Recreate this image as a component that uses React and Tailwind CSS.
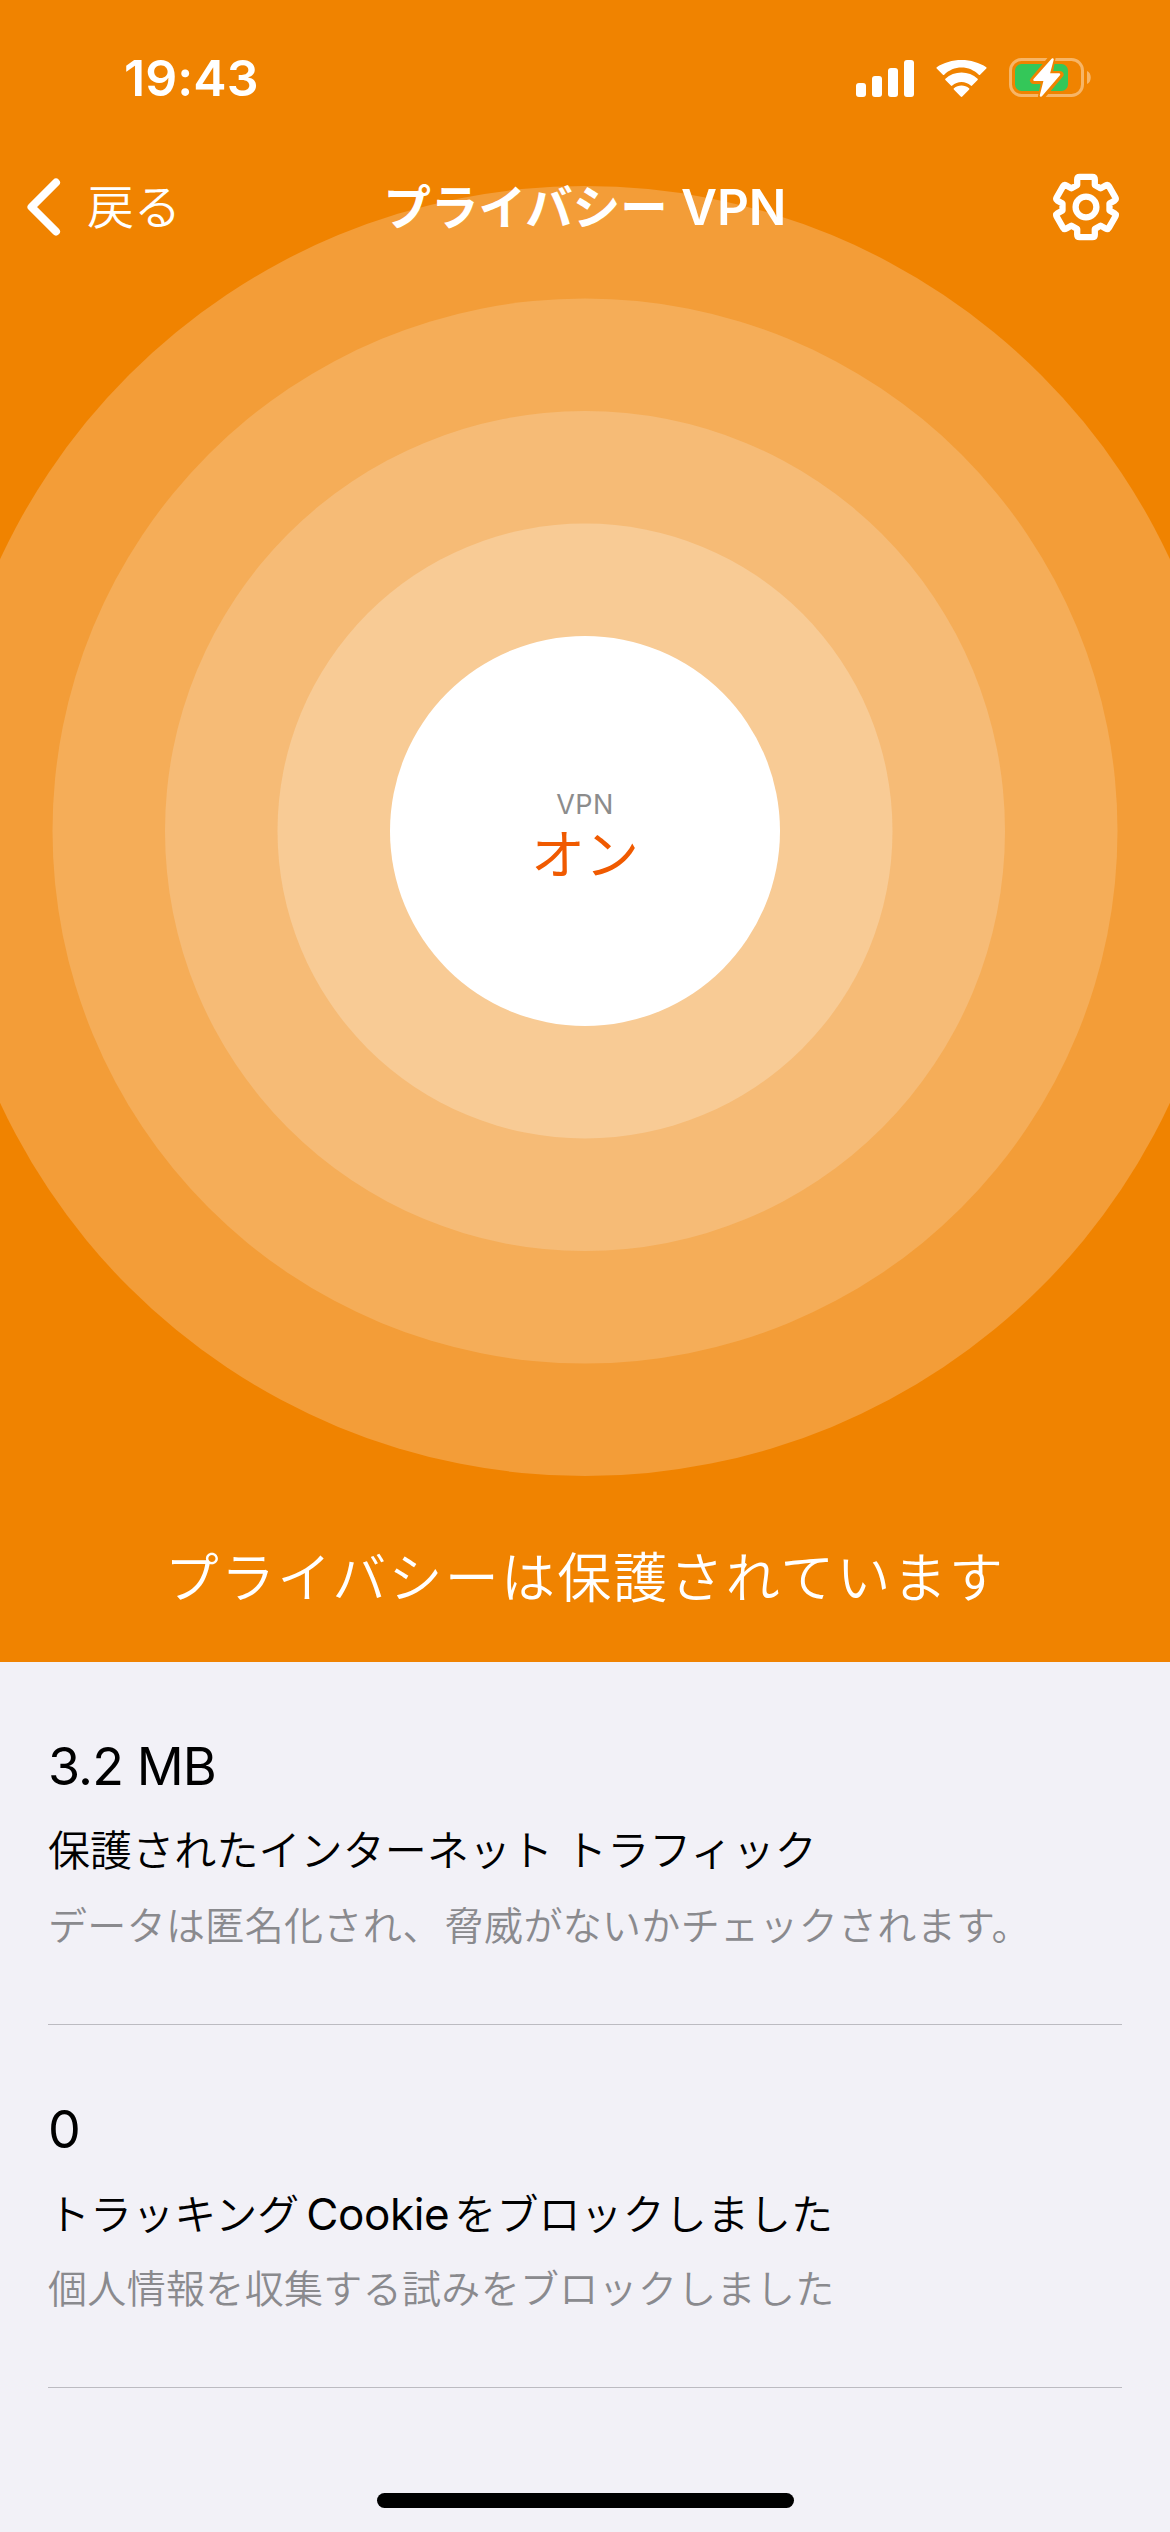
import React from 'react';

const rings = [
  'h-[1290px] w-[1290px] bg-[#f39d38]',
  'h-[1065px] w-[1065px] bg-[#f5ad58]',
  'h-[840px] w-[840px] bg-[#f6bb76]',
  'h-[615px] w-[615px] bg-[#f8cb95]',
];

const stats = [
  {
    value: '3.2 MB',
    title: '保護されたインターネット トラフィック',
    detail: (
      <>
        データは匿名化され<span className="mr-[3px]">、</span>脅威がないかチェックされます。
      </>
    ),
  },
  {
    value: '0',
    title: (
      <>
        トラッキング
        <span className="mr-[5px] ml-[7px] text-[44px] font-normal tracking-[-0.4px]">Cookie</span>
        をブロックしました
      </>
    ),
    detail: '個人情報を収集する試みをブロックしました',
  },
];

const SignalIcon = () => (
  <svg className="h-[37px] w-[58px]" viewBox="0 0 58 37" fill="#fff">
    <rect x="0" y="23" width="10" height="14" rx="3" />
    <rect x="16" y="16" width="10" height="21" rx="3" />
    <rect x="32" y="8" width="10" height="29" rx="3" />
    <rect x="48" y="0" width="10" height="37" rx="3" />
  </svg>
);

const WifiIcon = () => (
  <svg className="ml-[22px] h-[37px] w-[51px]" viewBox="0 0 51 37" fill="#fff">
    <path d="M25.5 7.6c6.5 0 12.6 2.6 17.3 7.1.4.4.9.4 1.3 0l6.2-6.2c.4-.4.4-.9 0-1.3C43.5 2.7 34.5 0 25.5 0S7.5 2.7.7 7.2c-.4.4-.4.9 0 1.3l6.2 6.2c.4.4.9.4 1.3 0 4.7-4.5 10.8-7.1 17.3-7.1z" />
    <path d="M25.5 22c3.4 0 6.7 1.3 9.2 3.6.4.4 1 .4 1.4 0l5.5-5.5c.4-.4.4-1 0-1.3-4.4-4.1-10.1-6.3-16.1-6.3s-11.7 2.2-16.1 6.3c-.4.3-.4.9 0 1.3l5.5 5.5c.4.4 1 .4 1.4 0 2.5-2.3 5.8-3.6 9.2-3.6z" />
    <path d="M33.2 29.4c.3-.4.3-.9-.1-1.2-2.2-1.7-4.8-2.7-7.6-2.7s-5.4 1-7.6 2.7c-.4.3-.4.8-.1 1.2l6.9 7.1c.4.5 1.2.5 1.6 0z" />
  </svg>
);

const BatteryIcon = () => (
  <svg className="mb-[2px] ml-[21px] h-[43px] w-[84px]" viewBox="0 0 84 43" fill="none">
    <rect x="2.5" y="3.5" width="72" height="36" rx="11" stroke="#f7b566" strokeWidth="3" />
    <path d="M79 15c5 2 5 11 0 13z" fill="#f7b566" />
    <rect x="7" y="8" width="53" height="27" rx="6.5" fill="#34c759" />
    <path
      d="M44 2 25.5 24.5H37L33.5 40.5 52 18.5H41z"
      fill="#f08300"
      stroke="#f08300"
      strokeWidth="7"
      strokeLinejoin="round"
    />
    <path
      d="M44.5 3.5 26.5 23.8H37L33 39.5 51 18.5H40.5z"
      fill="#fff"
      stroke="#fff"
      strokeWidth="2.5"
      strokeLinejoin="round"
    />
  </svg>
);

const BackIcon = () => (
  <svg className="h-[58px] w-[34px]" viewBox="0 0 34 58" fill="none">
    <path d="M29 4.5 4.5 29 29 53.5" stroke="#fff" strokeWidth="8" strokeLinecap="round" strokeLinejoin="round" />
  </svg>
);

const GearIcon = () => (
  <svg className="h-[68px] w-[68px]" viewBox="-34 -34 68 68" fill="none" stroke="#fff" strokeWidth="6.3">
    <path
      strokeLinejoin="round"
      d="M-8.8-22V-27.7Q-8.8-30.2-6.3-30.2H6.3Q8.8-30.2 8.8-27.7V-22L14.6-18.6 19.6-21.5Q21.8-22.7 23-20.6L29.3-9.7Q30.5-7.5 28.4-6.2L23.5-3.4V3.4L28.4 6.2Q30.5 7.5 29.3 9.7L23 20.6Q21.8 22.7 19.6 21.5L14.6 18.6 8.8 22V27.7Q8.8 30.2 6.3 30.2H-6.3Q-8.8 30.2-8.8 27.7V22L-14.6 18.6-19.6 21.5Q-21.8 22.7-23 20.6L-29.3 9.7Q-30.5 7.5-28.4 6.2L-23.5 3.4V-3.4L-28.4-6.2Q-30.5-7.5-29.3-9.7L-23-20.6Q-21.8-22.7-19.6-21.5L-14.6-18.6Z"
    />
    <circle r="10.4" />
  </svg>
);

const StatusBar = () => (
  <div className="relative flex h-[156px] items-center justify-between pl-[124px] pr-[78px]">
    <span className="text-[50px] leading-[60px] font-semibold tracking-[0.1px]">19:43</span>
    <div className="flex items-center">
      <SignalIcon />
      <WifiIcon />
      <BatteryIcon />
    </div>
  </div>
);

const NavBar = () => (
  <div className="relative grid h-[102px] grid-cols-[1fr_auto_1fr] items-center">
    <button className="flex items-center gap-[26px] pl-[27px]">
      <BackIcon />
      <span className="text-[47px] leading-[60px] font-[350]">戻る</span>
    </button>
    <h1 className="text-[47.5px] leading-[60px] font-bold">
      プライバシー <span className="ml-[2px] text-[49.5px] font-semibold">VPN</span>
    </h1>
    <button className="justify-self-end pr-[50px]">
      <GearIcon />
    </button>
  </div>
);

const Stat = ({ value, title, detail }) => (
  <div className="h-[363px] border-b border-[#bcbbc1] pt-[70px]">
    <div className="text-[52px] leading-[70px] tracking-[-0.9px]">{value}</div>
    <div className="mt-[19px] h-[60px] whitespace-nowrap text-[42px] leading-[60px] font-[350] tracking-[0.1px]">
      {title}
    </div>
    <div className="mt-[20px] whitespace-nowrap text-[39px] leading-[50px] font-[350] tracking-[0.33px] text-[#8a8a8e]">
      {detail}
    </div>
  </div>
);

export default function App() {
  return (
    <div className="flex h-[2532px] w-[1170px] flex-col overflow-hidden bg-[#f2f1f7] font-['Inter','Noto_Sans_CJK_JP',sans-serif] text-black">
      <section className="relative h-[1662px] overflow-hidden bg-[#f08300] text-white">
        {/* rings share one centre behind the bars */}
        {rings.map((ring) => (
          <div
            key={ring}
            className={`absolute top-[831px] left-1/2 -translate-x-1/2 -translate-y-1/2 rounded-full ${ring}`}
          />
        ))}
        <StatusBar />
        <NavBar />
        <div className="relative mx-auto mt-[378px] flex h-[390px] w-[390px] flex-col items-center rounded-full bg-white pt-[153px]">
          <span className="text-[27px] leading-[32px] tracking-[0.5px] text-[#8c8c8c]">VPN</span>
          <span className="mt-[3px] text-[54px] leading-[64px] text-[#f05a00]">オン</span>
        </div>
        <p className="relative mt-[513px] text-center text-[54px] leading-[80px] font-[350] tracking-[2.2px]">
          プライバシーは保護されています
        </p>
      </section>

      <section className="flex-1 px-[48px]">
        {stats.map((stat) => (
          <Stat key={stat.value} {...stat} />
        ))}
      </section>

      <div className="mx-auto mb-[24px] h-[15px] w-[417px] rounded-full bg-black" />
    </div>
  );
}
